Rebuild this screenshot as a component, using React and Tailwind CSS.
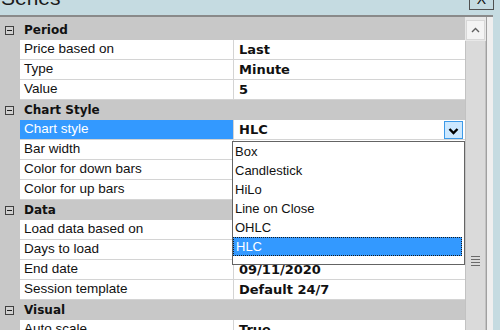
import React from "react";

const lab = "font-['Liberation_Sans',Arial,sans-serif] text-[13.5px]";
const item = "font-['Liberation_Sans',Arial,sans-serif] text-[13px]";
const val = "font-['DejaVu_Sans',Verdana,sans-serif] font-bold text-[13px]";
const hdr = "font-['DejaVu_Sans',Verdana,sans-serif] font-bold text-[12px]";

function Minus() {
  return (
    <div className="ml-[5px] w-[9px] h-[9px] border border-[#404040] bg-[#d0d0d0] flex items-center justify-center">
      <div className="w-[5px] h-[1px] bg-[#202020]" />
    </div>
  );
}

function Header({ title }) {
  return (
    <div className="flex items-center h-[20px] bg-[#c8c8c8] text-[#111]">
      <Minus />
      <span className={`${hdr} ml-[10px] leading-none`}>{title}</span>
    </div>
  );
}

function Row({ label, value, selected, button }) {
  return (
    <div className="flex h-[20px]">
      <div className="w-[20px] bg-[#c8c8c8]" />
      <div
        className={`w-[213px] flex items-center pl-[4px] border-b ${
          selected ? "bg-[#3399ff] text-white border-[#d4d4d4]" : "bg-white text-[#111] border-[#d4d4d4]"
        } ${lab}`}
      >
        {label}
      </div>
      <div className="w-[1px] bg-[#d4d4d4]" />
      <div className="flex-1 flex items-center bg-white border-b border-[#d4d4d4] pl-[5px] text-[#111]">
        <span className={`${val} flex-1`}>{value}</span>
        {button && (
          <div className="w-[19px] h-[18px] mr-[2px] bg-[#cce8ff] border border-[#3d9ae8] flex items-center justify-center">
            <svg width="11" height="9" viewBox="0 0 11 9" className="mt-[4px]">
              <path d="M1.5 2 L5.5 6 L9.5 2" fill="none" stroke="#000" strokeWidth="2.4" />
            </svg>
          </div>
        )}
      </div>
    </div>
  );
}

const items = ["Box", "Candlestick", "HiLo", "Line on Close", "OHLC", "HLC"];

export default function App() {
  return (
    <div className="relative w-[500px] h-[330px] overflow-hidden bg-[#c5dbe1]">
      {/* title bar */}
      <div className="flex justify-between h-[15px] overflow-hidden">
        <span className="font-['Liberation_Sans',Arial,sans-serif] text-[21px] leading-[21px] -mt-[13px] pl-[1px] text-[#1a1a1a]">
          Series
        </span>
        <div className="w-[25px] h-[22px] -mt-[12px] mr-[6px] border border-[#505050] flex items-center justify-center font-['Liberation_Sans',Arial,sans-serif] text-[14px] text-[#111]">
          X
        </div>
      </div>
      <div className="w-[493px] h-[2px] bg-[#8a8a8a]" />
      {/* body */}
      <div className="flex">
        <div className="w-[465px] bg-[#c8c8c8] pt-[3px]">
          <Header title="Period" />
          <Row label="Price based on" value="Last" />
          <Row label="Type" value="Minute" />
          <Row label="Value" value="5" />
          <Header title="Chart Style" />
          <Row label="Chart style" value="HLC" selected button />
          <Row label="Bar width" value="1" />
          <Row label="Color for down bars" value="Red" />
          <Row label="Color for up bars" value="LimeGreen" />
          <Header title="Data" />
          <Row label="Load data based on" value="Days" />
          <Row label="Days to load" value="5" />
          <Row label="End date" value="09/11/2020" />
          <Row label="Session template" value="Default 24/7" />
          <Header title="Visual" />
          <Row label="Auto scale" value="True" />
        </div>
        {/* scrollbar */}
        <div className="w-[21px] bg-[#e8e8e8] pt-[3px] flex flex-col">
          <div className="h-[20px] mx-[1px] bg-[#f4f4f4] border border-[#d8d8d8] flex items-center justify-center">
            <svg width="9" height="6" viewBox="0 0 9 6">
              <path d="M1 5 L4.5 1.5 L8 5" fill="none" stroke="#606060" strokeWidth="1.4" />
            </svg>
          </div>
          <div className="h-[440px] mt-[1px] bg-[#dadada] border-x border-[#c2c2c2] flex flex-col items-center justify-center gap-[2px]">
            <div className="w-[9px] h-[1px] bg-[#6a6a6a]" />
            <div className="w-[9px] h-[1px] bg-[#6a6a6a]" />
            <div className="w-[9px] h-[1px] bg-[#6a6a6a]" />
            <div className="w-[9px] h-[1px] bg-[#6a6a6a]" />
          </div>
        </div>
        <div className="w-[1px] bg-[#a0a0a0]" />
        <div className="w-[6px] bg-[#efefef]" />
      </div>

      {/* dropdown list */}
      <div className="absolute left-[232px] top-[141px] w-[233px] h-[124px] bg-white border border-[#646464]">
        {items.map((it) => (
          <div
            key={it}
            className={`h-[19px] flex items-center pl-[2px] ${item} ${
              it === "HLC"
                ? "bg-[#3399ff] text-white mr-[2px] border border-dotted border-[#1a1a1a] pl-[1px]"
                : "text-[#111]"
            }`}
          >
            {it}
          </div>
        ))}
      </div>
    </div>
  );
}
